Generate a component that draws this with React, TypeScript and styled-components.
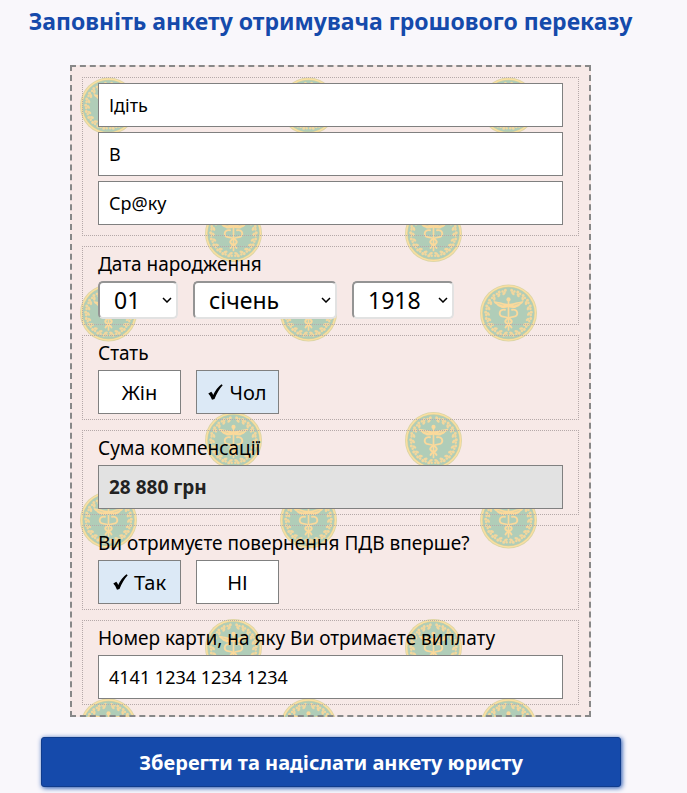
import React, { useState } from "react";
import styled, { createGlobalStyle } from "styled-components";

const sans = `"Noto Sans", "Open Sans", sans-serif`;

const GlobalStyle = createGlobalStyle`
  *, *::before, *::after { box-sizing: border-box; }
  body { margin: 0; background: #f9f7fb; color: #000; font-family: ${sans}; }
`;

/* Round seal with a laurel wreath and a caduceus, centred on 0,0 */
const leaves = Array.from({ length: 22 }, (_, i) => {
  const angle = 12 + (i * 336) / 21;
  const side = angle > 180 ? -1 : 1;
  return `<g transform="rotate(${angle})"><circle cx="${-1.6 * side}" cy="-22.8" r="1.5"/><circle cx="${1.3 * side}" cy="-22.3" r="1.3"/><ellipse cx="${0.3 * side}" cy="-20.3" rx="2.1" ry="1.3" transform="rotate(${35 * side} 0 -20.3)"/></g>`;
}).join("");

const seal = `
  <circle r="28.5" fill="#dbd5a6"/>
  <circle r="27.7" fill="#fbdf9f"/>
  <circle r="26.2" fill="#c9cfa3"/>
  <circle r="25.6" fill="#b0cdb8"/>
  <g fill="#f3d79d">${leaves}</g>
  <g fill="none" stroke="#fbd99b" stroke-linecap="round">
    <path d="M0 -12V17" stroke-width="1.7"/>
    <path d="M-3.500 -3.200C-9.800 -4.500 -10.500 3.200 -5.500 3.600C-2 4 2 5.500 3.200 8C4.200 11 -2.500 11.500 -3 14.500" stroke-width="1.900"/>
    <path d="M3.500 -3.200C9.800 -4.500 10.500 3.200 5.500 3.600C2 4 -2 5.500 -3.200 8C-4.200 11 2.500 11.500 3 14.500" stroke-width="1.900"/>
  </g>
  <g fill="#fbd99b">
    <circle cy="-13.600" r="2.100"/>
    <path d="M0 -9C-4 -9.500 -8 -10.800 -15 -12C-14.300 -9.800 -13 -8.900 -12 -8.500C-11 -6.800 -9.500 -6.200 -8.300 -6.100C-6.500 -4.500 -3 -4.500 0 -6C3 -4.500 6.500 -4.500 8.300 -6.100C9.500 -6.200 11 -6.800 12 -8.500C13 -8.900 14.300 -9.800 15 -12C8 -10.800 4 -9.500 0 -9Z"/>
  </g>
  <path d="M-11 -9.700L-5 -7.700M11 -9.700L5 -7.700" stroke="#c8d0ab" stroke-width=".6"/>`;

const tile = encodeURIComponent(
  `<svg xmlns="http://www.w3.org/2000/svg" width="200" height="207"><g transform="translate(36.500 39)">${seal}</g><g transform="translate(161.500 166.500)">${seal}</g></svg>`
).replace(/\(/g, "%28").replace(/\)/g, "%29");

const Page = styled.form`
  display: flex;
  flex-direction: column;
  padding: 6px 26px 6px 0;
`;

const Title = styled.h1`
  margin: 0;
  font-size: 23px;
  line-height: 30px;
  font-weight: 700;
  text-align: center;
  white-space: nowrap;
  color: #154aab;
`;

const Panel = styled.div`
  display: flex;
  flex-direction: column;
  gap: 10px;
  margin: 29px 70px 20px;
  padding: 10px;
  border: 2px dashed #888;
  background: #f7e9e7 url("data:image/svg+xml,${tile}");
`;

const Section = styled.div`
  display: flex;
  flex-direction: column;
  padding: 5px 15px;
  border: 1px dotted #b5a9a9;
`;

const NameSection = styled(Section)`
  gap: 5px;
  padding-bottom: 10px;
`;

const Label = styled.label`
  margin-bottom: 4px;
  font-size: 19px;
  line-height: 25px;
`;

const Row = styled.div`
  display: flex;
  gap: 15px;
`;

const TextInput = styled.input<{ $muted?: boolean }>`
  width: 100%;
  height: 44px;
  padding: 0 10px;
  border: 1px solid #808080;
  border-radius: 0;
  outline: 0;
  background: ${(p) => (p.$muted ? "#e2e2e2" : "#fff")};
  color: ${(p) => (p.$muted ? "#222" : "#000")};
  font-family: ${sans};
  font-size: ${(p) => (p.$muted ? 19 : 18)}px;
  font-weight: ${(p) => (p.$muted ? 700 : 400)};
`;

const SelectBox = styled.span`
  display: grid;
  align-items: center;
`;

const Select = styled.select<{ $width: number }>`
  grid-area: 1 / 1;
  appearance: none;
  width: ${(p) => p.$width}px;
  height: 38px;
  padding: 0 12px 0 14px;
  border: 2px solid;
  border-color: #949494 #e2e2e2 #e2e2e2 #949494;
  border-radius: 5px;
  background: #fff;
  color: #000;
  font-family: ${sans};
  font-size: 23px;
  line-height: 32px;
`;

const Arrow = styled.svg`
  grid-area: 1 / 1;
  justify-self: end;
  margin-right: 6px;
  pointer-events: none;
`;

const Choice = styled.button<{ $on: boolean }>`
  display: flex;
  align-items: center;
  justify-content: center;
  gap: 6px;
  width: 83px;
  height: 44px;
  padding: 0;
  border: 1px solid #808080;
  background: ${(p) => (p.$on ? "#dce9f6" : "#fff")};
  color: #000;
  font-family: ${sans};
  font-size: 20px;
`;

const Submit = styled.button`
  height: 50px;
  margin: 0 40px 0 41px;
  border: 1px solid #103c8c;
  border-radius: 3px;
  background: #154aab;
  box-shadow: 1px 1px 5px #154aab;
  color: #fff;
  font-family: ${sans};
  font-size: 20px;
  font-weight: 700;
`;

const Tick = () => (
  <svg width="15" height="16" viewBox="0 0 15 16" aria-hidden="true">
    <path d="M0.300 9.500L3.300 7.800Q4.600 9 5.200 11Q8.500 4 13.500 0.300L14.700 1.200Q9.800 6.500 6.500 15L4 15.700Q2.800 12 0.300 9.500Z" fill="#000" />
  </svg>
);

type DropProps = { id?: string; label?: string; width: number; options: string[]; initial: string };

const Drop = ({ id, label, width, options, initial }: DropProps) => (
  <SelectBox>
    <Select id={id} aria-label={label} $width={width} defaultValue={initial}>
      {options.map((o) => (
        <option key={o}>{o}</option>
      ))}
    </Select>
    <Arrow width="10" height="6" viewBox="0 0 10 6" aria-hidden="true">
      <path d="M1 1L5 5L9 1" fill="none" stroke="#000" strokeWidth="1.500" />
    </Arrow>
  </SelectBox>
);

type ChoiceProps = { id: string; label: string; options: string[]; initial: string };

const Choices = ({ id, label, options, initial }: ChoiceProps) => {
  const [value, setValue] = useState(initial);
  return (
    <Section role="group" aria-labelledby={id}>
      <Label as="span" id={id}>{label}</Label>
      <Row>
        {options.map((o) => (
          <Choice key={o} type="button" $on={o === value} aria-pressed={o === value} onClick={() => setValue(o)}>
            {o === value && <Tick />}
            {o}
          </Choice>
        ))}
      </Row>
    </Section>
  );
};

const days = Array.from({ length: 31 }, (_, i) => String(i + 1).padStart(2, "0"));
const months = ["січень", "лютий", "березень", "квітень", "травень", "червень", "липень", "серпень", "вересень", "жовтень", "листопад", "грудень"];
const years = Array.from({ length: 90 }, (_, i) => String(1918 + i));

export default function App() {
  return (
    <>
      <GlobalStyle />
      <Page onSubmit={(e) => e.preventDefault()}>
        <Title>Заповніть анкету отримувача грошового переказу</Title>
        <Panel>
          <NameSection>
            <TextInput aria-label="Прізвище" defaultValue="Ідіть" />
            <TextInput aria-label="Ім'я" defaultValue="В" />
            <TextInput aria-label="По батькові" defaultValue="Ср@ку" />
          </NameSection>
          <Section>
            <Label htmlFor="day">Дата народження</Label>
            <Row>
              <Drop id="day" width={80} options={days} initial="01" />
              <Drop label="Місяць" width={144} options={months} initial="січень" />
              <Drop label="Рік" width={102} options={years} initial="1918" />
            </Row>
          </Section>
          <Choices id="sex" label="Стать" options={["Жін", "Чол"]} initial="Чол" />
          <Section>
            <Label htmlFor="sum">Сума компенсації</Label>
            <TextInput id="sum" $muted readOnly value="28 880 грн" />
          </Section>
          <Choices id="first" label="Ви отримуєте повернення ПДВ вперше?" options={["Так", "НІ"]} initial="Так" />
          <Section>
            <Label htmlFor="card">Номер карти, на яку Ви отримаєте виплату</Label>
            <TextInput id="card" inputMode="numeric" defaultValue="4141 1234 1234 1234" />
          </Section>
        </Panel>
        <Submit type="submit">Зберегти та надіслати анкету юристу</Submit>
      </Page>
    </>
  );
}
